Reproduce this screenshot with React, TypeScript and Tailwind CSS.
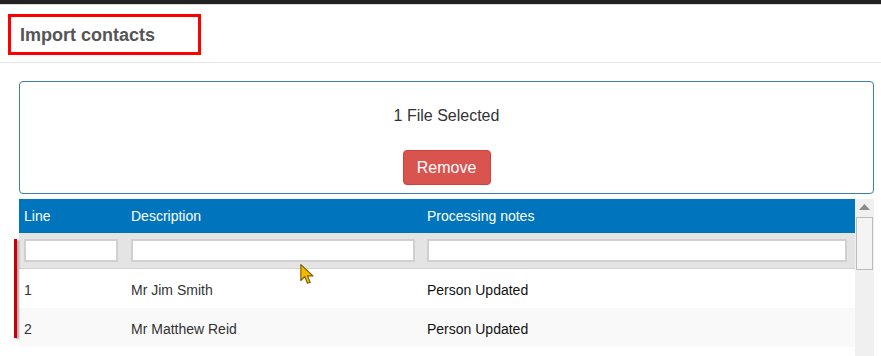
import React from "react";

export default function App() {
  const font = { fontFamily: '"Liberation Sans", Arial, sans-serif' };
  return (
    <div className="relative w-[881px] h-[356px] overflow-hidden bg-white" style={font}>
      <div className="h-[4px] bg-[#222222]" />
      <div className="h-px bg-[#d8d8d8]" />
      {/* header */}
      <div className="h-[58px] border-b border-[#e5e5e5] pl-[8px] pt-[9px]">
        <div className="w-[193px] h-[41px] border-[3px] border-[#ff0000] flex items-center pl-[9px]">
          <span className="text-[18px] font-bold text-[#555555] leading-none">Import contacts</span>
        </div>
      </div>
      {/* body */}
      <div className="pl-[19px] pt-[18px] w-[874px]">
        <div className="h-[113px] border border-[#3d7cb4] rounded-[4px] flex flex-col items-center">
          <div className="mt-[25px] text-[16px] text-[#333333] leading-[18px]">1 File Selected</div>
          <button className="mt-[25px] w-[88px] h-[35px] bg-[#d9534f] rounded-[4px] text-white text-[16px] border border-[#d43f3a]">
            Remove
          </button>
        </div>
        <div className="mt-[5px] flex h-[157px]">
          <div className="flex-1 flex flex-col">
            <div className="h-[34px] bg-[#0075be] flex items-center text-white text-[14px]">
              <div className="w-[107px] pl-[5px]">Line</div>
              <div className="w-[296px] pl-[5px]">Description</div>
              <div className="flex-1 pl-[5px]">Processing notes</div>
            </div>
            <div className="h-[36px] bg-[#e4e4e4] border-b border-[#d2d2d2] flex items-center">
              <div className="w-[107px] pl-[5px] pr-[8px]">
                <div className="h-[23px] bg-white border-2 border-[#d0d0d0]" />
              </div>
              <div className="w-[296px] pl-[5px] pr-[7px]">
                <div className="h-[23px] bg-white border-2 border-[#d0d0d0]" />
              </div>
              <div className="flex-1 pl-[5px] pr-[8px]">
                <div className="h-[23px] bg-white border-2 border-[#d0d0d0]" />
              </div>
            </div>
            <div className="h-[39px] pt-[3px] bg-white flex items-center text-[14px] text-[#333333]">
              <div className="w-[107px] pl-[5px]">1</div>
              <div className="w-[296px] pl-[5px]">Mr Jim Smith</div>
              <div className="flex-1 pl-[5px] text-[#111111]">Person Updated</div>
            </div>
            <div className="h-[39px] pt-[3px] bg-[#f9f9f9] flex items-center text-[14px] text-[#333333]">
              <div className="w-[107px] pl-[5px]">2</div>
              <div className="w-[296px] pl-[5px]">Mr Matthew Reid</div>
              <div className="flex-1 pl-[5px] text-[#111111]">Person Updated</div>
            </div>
          </div>
          {/* scrollbar */}
          <div className="w-[19px] bg-[#f0f0f0] flex flex-col items-center">
            <svg width="11" height="6" viewBox="0 0 11 6" className="mt-[5px]">
              <polygon points="0,6 5.5,0 11,6" fill="#8a8a8a" />
            </svg>
            <div className="mt-[7px] w-[17px] h-[53px] bg-[#f4f4f4] border border-[#bcbcbc]" />
          </div>
        </div>
      </div>
      {/* annotation red line */}
      <div className="absolute left-[14px] top-[239px] w-[3px] h-[99px] bg-[#cc0000] shadow-[2px_1px_2px_rgba(0,0,0,0.35)]" />
      {/* cursor */}
      <svg className="absolute left-[300px] top-[264px]" width="16" height="22" viewBox="0 0 14 20">
        <path d="M0.5 0.5 L0.5 15 L4 11.5 L6.5 17.5 L9 16.5 L6.5 10.8 L11.5 10.8 Z" fill="#f5b800" stroke="#7a5a00" strokeWidth="1" strokeLinejoin="round" />
      </svg>
    </div>
  );
}
